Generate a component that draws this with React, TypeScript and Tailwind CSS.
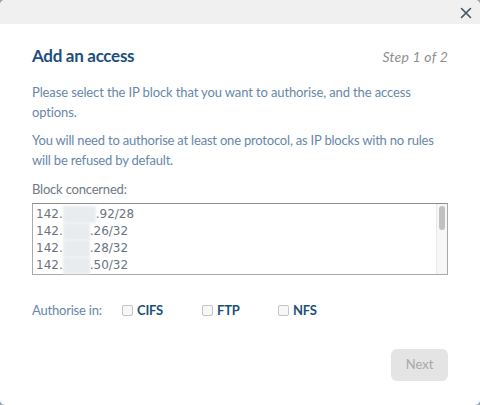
import React from "react";

const rows = [
  { a: "142.", b: ".92/28", w: 33 },
  { a: "142.", b: ".26/32", w: 27 },
  { a: "142.", b: ".28/32", w: 27 },
  { a: "142.", b: ".50/32", w: 27 },
];

function Check({ label }: { label: string }) {
  return (
    <label className="flex items-center gap-[4px]">
      <span className="w-[11px] h-[11px] rounded-[2px] border border-[#c4c4c4] bg-[#f7f7f7] inline-block" />
      <span className="text-[13px] font-bold text-[#1d4f7c] tracking-[-0.2px]">{label}</span>
    </label>
  );
}

export default function App() {
  return (
    <div className="w-[480px] h-[405px] bg-[#9aa3ad]" style={{ fontFamily: "Lato, 'Open Sans', sans-serif" }}>
      <div className="w-[480px] h-[405px] bg-white rounded-[5px] overflow-hidden flex flex-col">
        <div className="h-[24px] bg-[#f0f0f0] flex justify-end items-center pr-[8px]">
          <svg width="12" height="12" viewBox="0 0 12 12" className="mt-[1px]">
            <path d="M1.5 1.5 L10.5 10.5 M10.5 1.5 L1.5 10.5" stroke="#3f5266" strokeWidth="1.6" strokeLinecap="round" />
          </svg>
        </div>
        <div className="px-[32px] flex flex-col">
          <div className="flex justify-between items-baseline mt-[20px]">
            <h1 className="text-[17px] font-bold text-[#1d4f7c] leading-[24px] tracking-[-0.3px]">Add an access</h1>
            <span className="text-[14px] italic text-[#8f8f8f] tracking-[0.2px]">Step 1 of 2</span>
          </div>
          <p className="mt-[14px] text-[13px] leading-[20px] text-[#6787aa] tracking-[-0.12px]">
            Please select the IP block that you want to authorise, and the access options.
          </p>
          <p className="mt-[8px] text-[13px] leading-[20px] text-[#6787aa] tracking-[-0.2px]">
            You will need to authorise at least one protocol, as IP blocks with no rules will be refused by default.
          </p>
          <div className="mt-[9px] text-[13px] leading-[20px] text-[#707a85] tracking-[-0.2px]">Block concerned:</div>
          <div className="mt-[4px] h-[72px] border border-[#a9a9a9] border-t-[#8d8d8d] flex">
            <div className="flex-1 pt-[2px] pl-[3px] text-[12px] leading-[17px] text-[#6b7480]" style={{ fontFamily: "'DejaVu Sans', sans-serif" }}>
              {rows.map((r, i) => (
                <div key={i} className="flex items-center h-[17px]">
                  <span>{r.a}</span>
                  <span className="h-[17px] bg-[#e9ecef] blur-[1px]" style={{ width: r.w }} />
                  <span>{r.b}</span>
                </div>
              ))}
            </div>
            <div className="w-[11px] bg-[#f7f7f7] border-l border-[#e8e8e8] flex justify-center pt-[2px]">
              <div className="w-[6px] h-[24px] rounded-[3px] bg-[#c1c1c1]" />
            </div>
          </div>
          <div className="mt-[26px] flex items-center">
            <span className="w-[90px] text-[13px] text-[#6787aa] tracking-[-0.2px]">Authorise in:</span>
            <div className="w-[80px]"><Check label="CIFS" /></div>
            <div className="w-[76px]"><Check label="FTP" /></div>
            <div><Check label="NFS" /></div>
          </div>
          <div className="mt-[28px] flex justify-end">
            <button className="w-[57px] h-[32px] rounded-[6px] bg-[#e4e4e4] text-[13px] text-[#a8a8a8]">Next</button>
          </div>
        </div>
      </div>
    </div>
  );
}
